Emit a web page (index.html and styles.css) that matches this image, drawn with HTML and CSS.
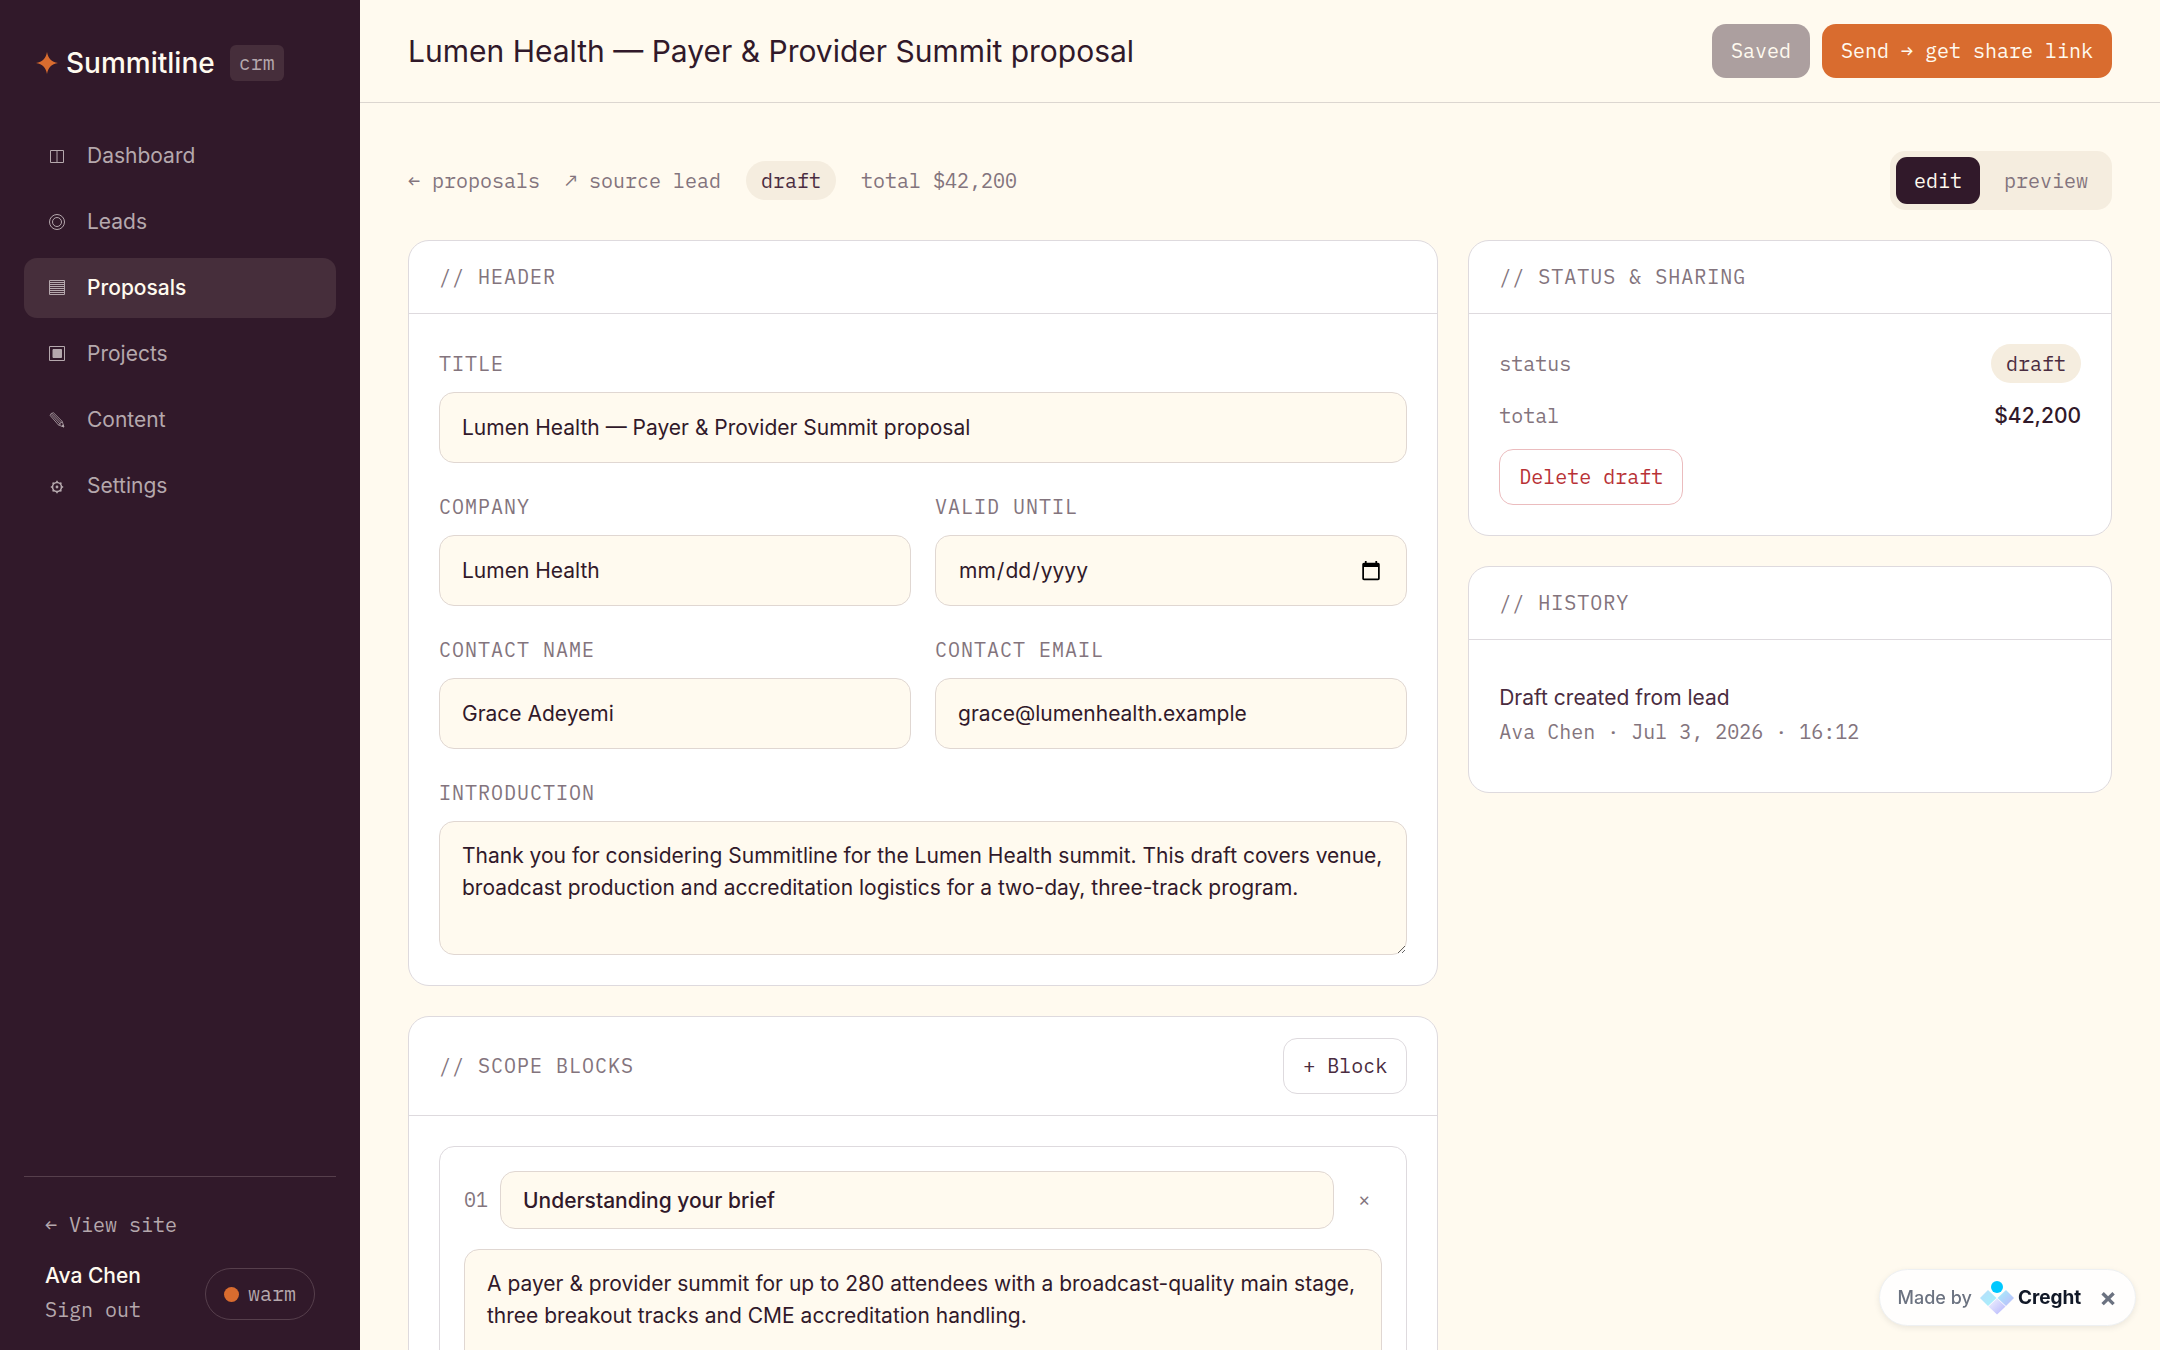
FILE: index.html
```html
<!DOCTYPE html>
<html lang="en">
  <head>
    <meta charset="utf-8" />
    <meta name="viewport" content="width=device-width, initial-scale=1" />
    <title>Lumen Health proposal | Summitline CRM</title>
    <link rel="stylesheet" href="styles.css">
  </head>

  <body>
    <div class="app">
      <aside class="sidebar">
        <div class="brand">
          <svg class="brand-star" viewBox="0 0 20 20" aria-hidden="true"><path d="M10 0C11 6 14 9 20 10C14 11 11 14 10 20C9 14 6 11 0 10C6 9 9 6 10 0Z" /></svg>
          <span class="brand-name">Summitline</span>
          <span class="brand-tag">crm</span>
        </div>

        <nav class="nav">
          <a href="#" class="nav-link">
            <svg class="nav-icon" viewBox="0 0 24 24" aria-hidden="true"><path d="M5.5 6.500h13v12h-13zM12 6.500v12" /></svg>
            Dashboard
          </a>
          <a href="#" class="nav-link">
            <svg class="nav-icon" viewBox="0 0 24 24" aria-hidden="true"><circle cx="12" cy="12" r="7.500" /><circle cx="12" cy="12" r="4.500" /></svg>
            Leads
          </a>
          <a href="#" class="nav-link active">
            <svg class="nav-icon" viewBox="0 0 24 24" aria-hidden="true"><path d="M4.500 4.500h15v14h-15zM5 6.500h14M5 8.500h14M5 10.500h14M5 12.500h14M5 14.500h14M5 16.500h14" /></svg>
            Proposals
          </a>
          <a href="#" class="nav-link">
            <svg class="nav-icon" viewBox="0 0 24 24" aria-hidden="true"><path d="M4.500 4.500h15v14h-15z" /><path class="solid" d="M8 7.500h8.500v8H8z" /></svg>
            Projects
          </a>
          <a href="#" class="nav-link">
            <svg class="nav-icon thin" viewBox="0 0 24 24" aria-hidden="true"><path d="M5.200 7.500Q5.500 4.800 8.500 4.800L17.300 13.500L18.800 19L13.500 17ZM6.200 6.500L15.500 16.500M7.200 5.500L16.500 15M13.500 17L17.300 13.500" /><path class="solid" d="M16.800 18.200L18.200 16.800L18.800 19Z" /></svg>
            Content
          </a>
          <a href="#" class="nav-link">
            <svg class="nav-icon thick" viewBox="0 0 24 24" aria-hidden="true"><circle cx="12" cy="13" r="4.500" /><circle class="solid" cx="12" cy="13" r="0.600" /><path d="M12 6.800v2M12 17.200v2M5.800 13h2M16.200 13h2M7.600 8.600l1.400 1.400M15 16l1.400 1.400M7.600 17.400l1.400-1.400M15 10l1.400-1.400" /></svg>
            Settings
          </a>
        </nav>

        <div class="sidebar-foot">
          <a href="#" class="foot-link">← View site</a>
          <div class="user">
            <div>
              <div class="user-name">Ava Chen</div>
              <button type="button" class="sign-out">Sign out</button>
            </div>
            <button type="button" class="theme"><span class="theme-dot"></span>warm</button>
          </div>
        </div>
      </aside>

      <div class="page">
        <header class="topbar">
          <h1>Lumen Health — Payer &amp; Provider Summit proposal</h1>
          <div class="actions">
            <button type="button" class="btn btn-dark" disabled>Saved</button>
            <button type="button" class="btn btn-accent">Send → get share link</button>
          </div>
        </header>

        <main>
          <div class="toolbar">
            <a href="#">← proposals</a>
            <a href="#">↗ source lead</a>
            <span class="pill">draft</span>
            <span>total $42,200</span>
            <div class="toggle">
              <button type="button" class="on">edit</button>
              <button type="button">preview</button>
            </div>
          </div>

          <div class="columns">
            <div class="stack">
              <section class="card">
                <div class="card-head"><h2>// Header</h2></div>
                <div class="card-body fields">
                  <div class="field wide">
                    <label for="title">Title</label>
                    <input type="text" id="title" value="Lumen Health — Payer &amp; Provider Summit proposal" />
                  </div>
                  <div class="field">
                    <label for="company">Company</label>
                    <input type="text" id="company" value="Lumen Health" />
                  </div>
                  <div class="field">
                    <label for="valid">Valid until</label>
                    <input type="date" id="valid" />
                  </div>
                  <div class="field">
                    <label for="contact">Contact name</label>
                    <input type="text" id="contact" value="Grace Adeyemi" />
                  </div>
                  <div class="field">
                    <label for="email">Contact email</label>
                    <input type="email" id="email" value="grace@lumenhealth.example" />
                  </div>
                  <div class="field wide">
                    <label for="intro">Introduction</label>
                    <textarea id="intro" rows="3">Thank you for considering Summitline for the Lumen Health summit. This draft covers venue, broadcast production and accreditation logistics for a two-day, three-track program.</textarea>
                  </div>
                </div>
              </section>

              <section class="card">
                <div class="card-head">
                  <h2>// Scope blocks</h2>
                  <button type="button" class="btn btn-ghost">+ Block</button>
                </div>
                <div class="card-body">
                  <div class="block">
                    <div class="block-row">
                      <span class="block-num">01</span>
                      <input type="text" class="block-title" aria-label="Block title" value="Understanding your brief" />
                      <button type="button" class="block-remove" aria-label="Remove block">×</button>
                    </div>
                    <textarea rows="4" aria-label="Block text">A payer &amp; provider summit for up to 280 attendees with a broadcast-quality main stage, three breakout tracks and CME accreditation handling.</textarea>
                  </div>
                </div>
              </section>
            </div>

            <div class="stack">
              <section class="card">
                <div class="card-head"><h2>// Status &amp; sharing</h2></div>
                <div class="card-body status">
                  <div class="status-row"><span>status</span><span class="pill">draft</span></div>
                  <div class="status-row"><span>total</span><strong>$42,200</strong></div>
                  <button type="button" class="btn btn-danger">Delete draft</button>
                </div>
              </section>

              <section class="card">
                <div class="card-head"><h2>// History</h2></div>
                <div class="card-body">
                  <div class="event">
                    <p class="event-text">Draft created from lead</p>
                    <p class="event-meta">Ava Chen · Jul 3, 2026 · 16:12</p>
                  </div>
                </div>
              </section>
            </div>
          </div>
        </main>
      </div>
    </div>

    <div class="made-by">
      <span>Made by</span>
      <svg class="made-logo" viewBox="0 0 34 34" aria-hidden="true">
        <defs>
          <linearGradient id="g1" x1="0" y1="0" x2="1" y2="1"><stop offset="0" stop-color="#b9dcfb" /><stop offset="1" stop-color="#a5f3fb" /></linearGradient>
          <linearGradient id="g2" x1="0" y1="0" x2="1" y2="1"><stop offset="0" stop-color="#a5f0fb" /><stop offset="1" stop-color="#bfb8fb" /></linearGradient>
          <linearGradient id="g3" x1="0" y1="0" x2="1" y2="1"><stop offset="0" stop-color="#f3f4ff" /><stop offset="1" stop-color="#b4b5fb" /></linearGradient>
        </defs>
        <path fill="url(#g1)" d="M8 9L16.500 17L8 25L0 17Z" />
        <path fill="url(#g2)" d="M26 9L34 17L26 25L17.500 17Z" />
        <path fill="url(#g3)" d="M17 17.500L25.500 25.500L17 33.500L8.500 25.500Z" />
        <circle cx="17" cy="6" r="6" fill="#00c8ff" />
      </svg>
      <strong>Creght</strong>
      <button type="button" class="made-close" aria-label="Close">×</button>
    </div>
  </body>
</html>
```
FILE: styles.css
```css
/* ------------------------------ reset ------------------------------ */
* {
  margin: 0;
  padding: 0;
  box-sizing: border-box;
}

:root {
  --plum: #31192a;
  --plum-mid: #4a2c40;
  --muted: #83747d;
  --cream: #fffaef;
  --sand: #f5eddf;
  --orange: #d96c2f;
  --line: #dedade;
  --mono: "IBM Plex Mono", "Liberation Mono", monospace;
  --sans: "Inter", sans-serif;
}

body {
  background: var(--cream);
  color: var(--plum);
  font-family: var(--sans);
  font-size: 21px;
  line-height: 32px;
}

a {
  color: inherit;
  text-decoration: none;
}

button,
input,
textarea {
  font: inherit;
  color: inherit;
}

button {
  border: 0;
  background: none;
  cursor: pointer;
  font-family: var(--mono);
  font-size: 20px;
}

/* ------------------------------ shell ------------------------------ */
.app {
  display: grid;
  grid-template-columns: 360px 1fr;
  grid-template-rows: 100vh;
  height: 100vh;
  overflow: hidden;
}

.page {
  min-width: 0;
  overflow: hidden;
}

/* ------------------------------ sidebar ------------------------------ */
.sidebar {
  display: flex;
  flex-direction: column;
  padding: 36px 24px 22px;
  background: var(--plum);
  color: #b5a8ad;
}

.brand {
  display: flex;
  align-items: center;
  height: 54px;
  padding: 0 12px;
}
.brand-star {
  width: 22px;
  height: 22px;
  margin-right: 8px;
  fill: var(--orange);
}
.brand-name {
  color: var(--cream);
  font-size: 28px;
  font-weight: 500;
  margin-right: 15px;
}
.brand-tag {
  padding: 2px 9px;
  border-radius: 6px;
  background: #462e3b;
  font-family: var(--mono);
  font-size: 20px;
}

.nav {
  display: flex;
  flex-direction: column;
  gap: 6px;
  margin-top: 36px;
}
.nav-link {
  display: flex;
  align-items: center;
  gap: 18px;
  height: 60px;
  padding: 0 21px;
  border-radius: 13px;
}
.nav-link.active {
  background: #462e3b;
  color: var(--cream);
  font-weight: 500;
}
.nav-icon {
  width: 24px;
  height: 24px;
  fill: none;
  stroke: #b5a8ad;
}
.nav-icon.thin {
  stroke-width: 0.8;
}
.nav-icon.thick {
  stroke-width: 1.6;
}
.nav-icon .solid {
  fill: #b5a8ad;
}

.sidebar-foot {
  margin-top: auto;
  padding: 32px 21px 0;
  border-top: 1px solid #563f4c;
}
.foot-link,
.sign-out {
  display: block;
  font-family: var(--mono);
  font-size: 20px;
}
.user {
  display: flex;
  align-items: center;
  justify-content: space-between;
  margin-top: 19px;
}
.user-name {
  color: var(--cream);
  font-weight: 500;
}
.sign-out {
  line-height: 36px;
}
.theme {
  display: flex;
  align-items: center;
  gap: 9px;
  height: 52px;
  padding: 0 18px;
  border: 1px solid #563f4c;
  border-radius: 26px;
}
.theme-dot {
  width: 15px;
  height: 15px;
  border-radius: 50%;
  background: var(--orange);
}

/* ------------------------------ top bar ------------------------------ */
.topbar {
  display: flex;
  align-items: center;
  justify-content: space-between;
  height: 103px;
  padding: 0 48px;
  border-bottom: 1px solid #dcd6d0;
}
.topbar h1 {
  font-size: 30px;
  font-weight: 400;
}
.actions {
  display: flex;
  gap: 12px;
}

.btn {
  height: 56px;
  padding: 0 19px;
  border-radius: 14px;
}
.btn-dark,
.btn-accent {
  height: 54px;
  color: var(--cream);
}
.btn-dark {
  background: var(--plum);
}
.btn-dark:disabled {
  opacity: 0.4;
}
.btn-accent {
  background: var(--orange);
}
.btn-ghost {
  border: 1px solid var(--line);
  color: var(--plum-mid);
}
.btn-danger {
  border: 1px solid #ebbcbe;
  color: #b83236;
}

/* ------------------------------ toolbar ------------------------------ */
main {
  padding: 48px;
}

.toolbar {
  display: flex;
  align-items: center;
  gap: 25px;
  margin-bottom: 30px;
  color: var(--muted);
  font-family: var(--mono);
  font-size: 20px;
}
.pill {
  height: 39px;
  padding: 0 15px;
  border-radius: 20px;
  background: var(--sand);
  color: var(--plum-mid);
  line-height: 39px;
}
.toggle {
  display: flex;
  gap: 6px;
  margin-left: auto;
  padding: 6px;
  border-radius: 15px;
  background: var(--sand);
}
.toggle button {
  height: 47px;
  padding: 0 18px;
  border-radius: 11px;
}
.toggle .on {
  background: var(--plum);
  color: var(--cream);
}

/* ------------------------------ cards ------------------------------ */
.columns {
  display: grid;
  grid-template-columns: 1.6fr 1fr;
  align-items: start;
  gap: 30px;
}
.stack {
  display: grid;
  gap: 30px;
}
.card {
  border: 1px solid var(--line);
  border-radius: 21px;
  background: #fff;
}
.card-head {
  display: flex;
  align-items: center;
  justify-content: space-between;
  padding: 21px 30px;
  border-bottom: 1px solid var(--line);
}
.card-head h2,
.field label {
  color: var(--muted);
  font-family: var(--mono);
  font-size: 20px;
  font-weight: 400;
  letter-spacing: 1px;
  text-transform: uppercase;
}
.card-head h2 {
  line-height: 30px;
}
.card-body {
  padding: 30px;
}

/* ------------------------------ form ------------------------------ */
.fields {
  display: grid;
  grid-template-columns: 1fr 1fr;
  gap: 24px;
}
.wide {
  grid-column: 1 / -1;
}
.field label {
  display: block;
  margin-bottom: 8px;
  line-height: 40px;
}
input,
textarea {
  display: block;
  width: 100%;
  padding: 18px 22px;
  border: 1px solid #e0d7d2;
  border-radius: 15px;
  background: var(--cream);
}
input {
  height: 71px;
}
textarea {
  resize: vertical;
}
input::-webkit-calendar-picker-indicator {
  width: 22px;
  height: 22px;
}

/* ------------------------------ scope blocks ------------------------------ */
.block {
  padding: 24px;
  border: 1px solid var(--line);
  border-radius: 15px;
}
.block-row {
  display: flex;
  align-items: center;
  gap: 12px;
  margin-bottom: 20px;
}
.block-num {
  color: var(--muted);
  font-family: var(--mono);
  font-size: 20px;
}
.block-title {
  flex: 1;
  height: 58px;
  font-weight: 500;
}
.block-remove {
  width: 36px;
  color: var(--muted);
}

/* ------------------------------ status, history ------------------------------ */
.status {
  display: grid;
  justify-items: start;
  gap: 18px;
}
.status-row {
  display: flex;
  align-items: center;
  justify-content: space-between;
  width: 100%;
  color: var(--muted);
  font-family: var(--mono);
  font-size: 20px;
  line-height: 30px;
}
.status-row .pill {
  line-height: 39px;
}
.status-row strong {
  color: var(--plum);
  font-family: var(--sans);
  font-size: 21px;
  font-weight: 500;
}

.event {
  padding: 12px 0;
}
.event-text {
  color: var(--plum-mid);
}
.event-meta {
  color: var(--muted);
  font-family: var(--mono);
  font-size: 20px;
  line-height: 36px;
}

/* ------------------------------ badge ------------------------------ */
.made-by {
  position: fixed;
  right: 24px;
  bottom: 24px;
  display: flex;
  align-items: center;
  height: 57px;
  padding: 0 18px;
  border: 1px solid #eef0f2;
  border-radius: 29px;
  background: #fffefd;
  box-shadow: 0 2px 6px rgba(0, 0, 0, 0.08);
  color: #6b7280;
  font-size: 18px;
  font-weight: 500;
}
.made-logo {
  width: 34px;
  height: 34px;
  margin: 0 4px 0 8px;
}
.made-by strong {
  color: #111827;
  font-size: 19px;
  font-weight: 700;
}
.made-close {
  margin-left: 18px;
  color: #6b7280;
  font-family: var(--sans);
  font-size: 26px;
  font-weight: 700;
}
```
